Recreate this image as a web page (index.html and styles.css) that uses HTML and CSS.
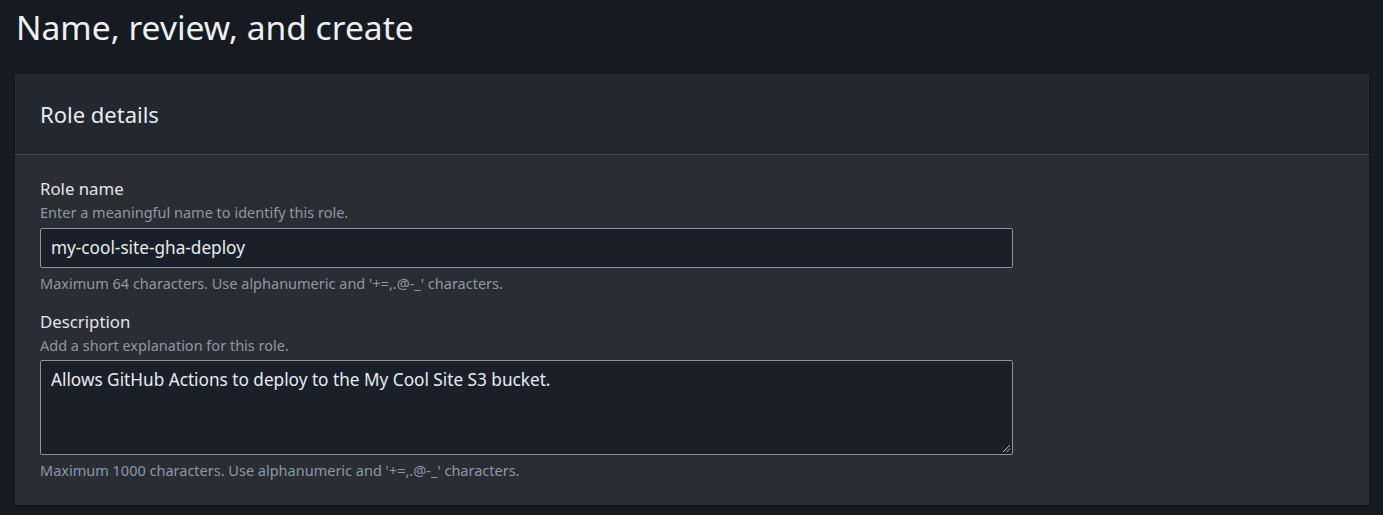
FILE: index.html
```html
<!DOCTYPE html>
<html>
<head>
<meta charset="utf-8">
<link rel="stylesheet" href="styles.css">
</head>
<body>
<div class="page">
  <h1 class="title">Name, review, and create</h1>
  <section class="card">
    <header class="card-header">
      <h2 class="card-title">Role details</h2>
    </header>
    <div class="card-body">
      <div class="field">
        <label class="label">Role name</label>
        <div class="desc">Enter a meaningful name to identify this role.</div>
        <div class="input">my-cool-site-gha-deploy</div>
        <div class="constraint">Maximum 64 characters. Use alphanumeric and '+=,.@-_' characters.</div>
      </div>
      <div class="field">
        <label class="label">Description</label>
        <div class="desc">Add a short explanation for this role.</div>
        <div class="textarea">Allows GitHub Actions to deploy to the My Cool Site S3 bucket.
          <svg class="grip" width="9" height="9" viewBox="0 0 9 9"><path d="M1 8 L8 1 M4.5 8 L8 4.5" stroke="#b8bec6" stroke-width="1"/></svg>
        </div>
        <div class="constraint">Maximum 1000 characters. Use alphanumeric and '+=,.@-_' characters.</div>
      </div>
    </div>
  </section>
</div>
</body>
</html>
```

FILE: styles.css
```css
* { box-sizing: border-box; }
html, body {
  margin: 0;
  padding: 0;
  background: #161a21;
  height: 100%;
}
body {
  font-family: "Noto Sans", "Open Sans", sans-serif;
  color: #e9ebed;
}
.page {
  padding: 0 14px 0 15px;
}
.title {
  margin: 0;
  padding: 5px 0 0 1px;
  height: 74px;
  font-size: 33.6px;
  font-weight: 400;
  line-height: 44px;
  color: #eef0f2;
}
.card {
  background: #2a2d33;
  box-shadow: 0 1px 2px rgba(0,0,0,0.5);
}
.card-header {
  background: #222730;
  height: 81px;
  border-bottom: 1px solid #414750;
  padding: 0 25px;
  display: flex;
  align-items: center;
}
.card-title {
  margin: 0;
  font-size: 22px;
  font-weight: 400;
  line-height: 28px;
  color: #e9ebed;
}
.card-body {
  padding: 22px 25px 25px;
  display: flex;
  flex-direction: column;
  gap: 17px;
}
.field {
  display: flex;
  flex-direction: column;
}
.label {
  font-size: 16.8px;
  line-height: 24px;
  color: #e2e4e7;
}
.desc {
  font-size: 14.5px;
  line-height: 22px;
  color: #8d98a6;
  margin-bottom: 5px;
}
.field + .field .desc { margin-bottom: 4px; }
.input, .textarea {
  width: 973px;
  background: #1a202a;
  border: 1px solid #8a949e;
  border-radius: 2px;
  color: #e9ebed;
  font-size: 17.2px;
  line-height: 22px;
  padding: 8px 10px;
}
.input { height: 40px; }
.textarea {
  height: 95px;
  position: relative;
}
.grip {
  position: absolute;
  right: 1px;
  bottom: 1px;
}
.constraint {
  margin-top: 5px;
  font-size: 14.5px;
  line-height: 20px;
  color: #8d98a6;
}
```
